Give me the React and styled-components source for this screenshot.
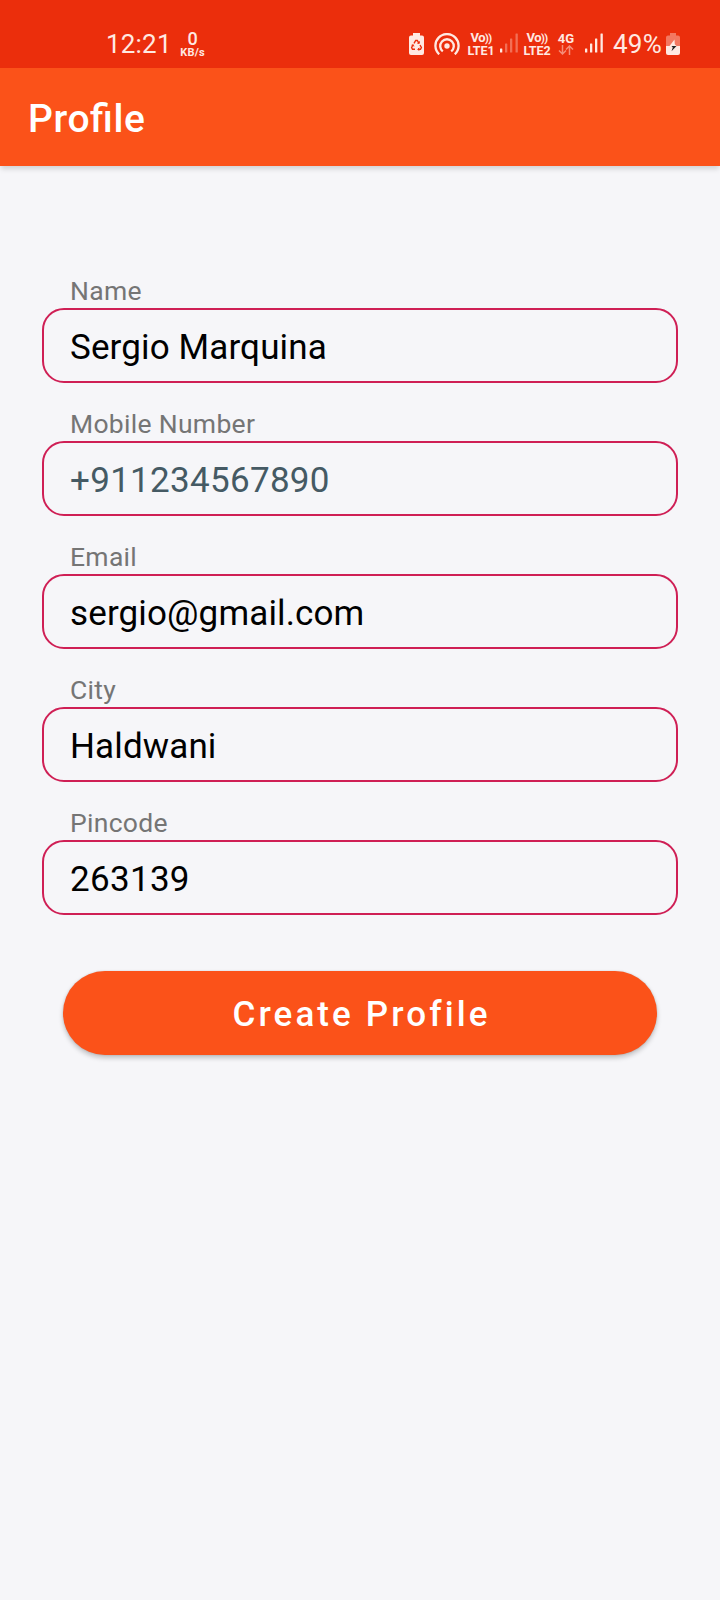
import React from "react";
import styled, { createGlobalStyle } from "styled-components";

const GlobalStyle = createGlobalStyle`
  * { box-sizing: border-box; }
  body { margin: 0; background: #f6f6f9; font-family: Roboto, sans-serif; }
`;

const Screen = styled.div`
  display: flex;
  flex-direction: column;
  width: 720px;
  height: 1600px;
  background: #f6f6f9;
  overflow: hidden;
`;

const StatusBar = styled.div`
  display: flex;
  align-items: flex-start;
  height: 68px;
  padding: 32px 40px 0 106px;
  background: #eb2e0c;
  color: #ffe9e2;
`;

const StatusText = styled.span`
  font-size: 26px;
  line-height: 24px;
  letter-spacing: ${(p) => p.$spacing || "0"};
  width: ${(p) => p.$width};
  white-space: nowrap;
`;

const Stack = styled.div`
  display: flex;
  flex-direction: column;
  align-items: center;
  width: ${(p) => p.$width};
  margin-left: ${(p) => p.$gap || "0"};
  white-space: nowrap;
`;

const Tiny = styled.span`
  font-size: ${(p) => p.$size};
  line-height: ${(p) => p.$line || "12px"};
  letter-spacing: ${(p) => p.$spacing || "0"};
  font-weight: ${(p) => p.$weight || 700};
`;

const Waves = styled.span`
  font-size: 11px;
  letter-spacing: -0.6px;
`;

const Spacer = styled.div`
  flex: 1;
`;

const Glyph = styled.svg`
  display: block;
  flex: none;
  margin-top: ${(p) => p.$top || "0"};
  margin-left: ${(p) => p.$gap || "0"};
`;

const AppBar = styled.header`
  display: flex;
  align-items: center;
  height: 98px;
  padding: 4px 28px 0;
  background: #fb5219;
  box-shadow: 0 4px 5px -1px rgba(0, 0, 0, 0.15);
`;

const Title = styled.h1`
  margin: 0;
  color: #fff;
  font-size: 39px;
  font-weight: 500;
  letter-spacing: 0.6px;
  font-feature-settings: "liga" 1;
`;

const Form = styled.main`
  display: flex;
  flex-direction: column;
  padding: 109px 42px 0;
`;

const Field = styled.div`
  height: 133px;
`;

const Label = styled.div`
  height: 33px;
  padding-left: 28px;
  color: #757575;
  font-size: 26.5px;
  line-height: 32px;
  letter-spacing: 0.3px;
`;

const Box = styled.div`
  display: flex;
  align-items: center;
  height: 75px;
  padding: 4px 26px 0;
  border: 2px solid #cf1f55;
  border-radius: 22px;
  color: ${(p) => (p.$muted ? "#455a64" : "#000")};
  font-size: 35px;
  letter-spacing: ${(p) => (p.$numeric ? "0.3px" : "0.13px")};
`;

const Button = styled.button`
  height: 84px;
  margin: 31px 21px 0;
  padding: 2px 0 0 3px;
  border: 0;
  border-radius: 42px;
  background: #fb5219;
  box-shadow: 0 3px 5px rgba(0, 0, 0, 0.22), 0 0 2px rgba(0, 0, 0, 0.14);
  color: #fff;
  font: 500 35px Roboto, sans-serif;
  letter-spacing: 3.1px;
`;

const fields = [
  { label: "Name", value: "Sergio Marquina" },
  { label: "Mobile Number", value: "+911234567890", muted: true, numeric: true },
  { label: "Email", value: "sergio@gmail.com" },
  { label: "City", value: "Haldwani" },
  { label: "Pincode", value: "263139", numeric: true },
];

function RecycleBattery() {
  return (
    <Glyph $top="1px" width="15" height="22" viewBox="0 0 15 22">
      <path d="M4 0h7v2.500h2q2 0 2 2V20q0 2-2 2H2q-2 0-2-2V4.500q0-2 2-2h2z" fill="currentColor" />
      <g fill="none" stroke="#eb2e0c" strokeWidth="1.400">
        <path d="M5 10.300 6.700 7.500h1.600L10 10.300M11 12l1.400 2.500-.9 1.800H9M6 16.300H3.500l-.9-1.800L4 12" />
        <path d="M8.300 10.300h2.100V8.200M10.200 14.800 8.700 16.300l1.500 1.500M2.500 12.200l1.800-.5.600 1.800" strokeWidth="0.900" />
      </g>
    </Glyph>
  );
}

function Hotspot() {
  return (
    <Glyph $top="1px" $gap="10px" width="26" height="22" viewBox="0 0 26 22">
      <circle cx="13" cy="13" r="2.700" fill="currentColor" />
      <g fill="none" stroke="currentColor" strokeWidth="2.300">
        <path d="M8.800 18.400a6.800 6.800 0 1 1 8.400 0" />
        <path d="M5.200 21.300a11.600 11.600 0 1 1 15.600 0" />
      </g>
    </Glyph>
  );
}

function Signal({ gap, level }) {
  const bars = [
    [0, 15, 4],
    [5, 10, 9],
    [10, 5, 14],
    [15.5, 0, 19],
  ];
  return (
    <Glyph $top="1px" $gap={gap} width="18" height="20" viewBox="0 0 18 20">
      {bars.map(([x, y, h], i) => (
        <rect key={x} x={x} y={y + 0.5} width="2.300" height={h} rx="0.500" fill="currentColor" opacity={i < level ? 1 : 0.35} />
      ))}
    </Glyph>
  );
}

function DataArrows() {
  return (
    <Glyph width="16" height="10" viewBox="0 0 16 10">
      <path d="M4.500 0v9M1 5.500 4.500 9 8 5.500M11.500 10V1M8 4.500 11.500 1 15 4.500" fill="none" stroke="currentColor" strokeWidth="1.500" opacity="0.500" />
    </Glyph>
  );
}

function ChargingBattery() {
  return (
    <Glyph $top="1px" $gap="4px" width="14" height="22" viewBox="0 0 14 22">
      <path d="M4 0h6v2.500h2q2 0 2 2V13H0V4.500q0-2 2-2h2z" fill="currentColor" opacity="0.400" />
      <path d="M0 13h14v7q0 2-2 2H2q-2 0-2-2z" fill="currentColor" />
      <path d="M8.500 6.500 3.500 13H10.500L8.800 11.200z" fill="#ffe9e2" />
      <path d="M5.500 13H10.500L5.500 18.200 6.800 14.500z" fill="#222" />
    </Glyph>
  );
}

function Volte({ line, gap }) {
  return (
    <Stack $width="26px" $gap={gap}>
      <Tiny $size="13px" $line="12px" $spacing="-0.5px">
        Vo<Waves>))</Waves>
      </Tiny>
      <Tiny $size="12.5px" $line="11px" $spacing="-0.1px">{line}</Tiny>
    </Stack>
  );
}

export default function App() {
  return (
    <Screen>
      <GlobalStyle />
      <StatusBar>
        <StatusText $width="74px" $spacing="0.2px">12:21</StatusText>
        <Stack $width="25px">
          <Tiny $size="18px" $line="14px" $weight={500}>0</Tiny>
          <Tiny $size="11px" $line="13px" $spacing="0.2px">KB/s</Tiny>
        </Stack>
        <Spacer />
        <RecycleBattery />
        <Hotspot />
        <Volte line="LTE1" gap="8px" />
        <Signal gap="6px" level={1} />
        <Volte line="LTE2" gap="6px" />
        <Stack $width="16px" $gap="8px">
          <Tiny $size="13px" $line="13px">4G</Tiny>
          <DataArrows />
        </Stack>
        <Signal gap="11px" level={4} />
        <Stack $width="49px" $gap="10px">
          <StatusText $spacing="0.2px">49%</StatusText>
        </Stack>
        <ChargingBattery />
      </StatusBar>
      <AppBar>
        <Title>Profile</Title>
      </AppBar>
      <Form>
        {fields.map((f) => (
          <Field key={f.label}>
            <Label>{f.label}</Label>
            <Box $muted={f.muted} $numeric={f.numeric}>{f.value}</Box>
          </Field>
        ))}
        <Button>Create Profile</Button>
      </Form>
    </Screen>
  );
}
